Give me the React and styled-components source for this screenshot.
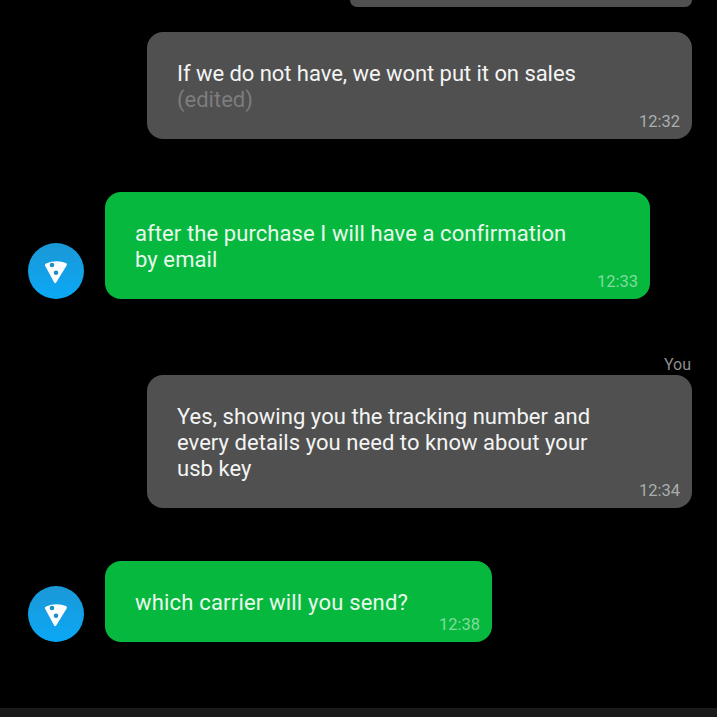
import React from "react"
import styled, { createGlobalStyle } from "styled-components"

const GlobalStyle = createGlobalStyle`
  html, body {
    background: #000;
    margin: 0;
    padding: 0;
  }
`

const Screen = styled.div`
  background: #000;
  color: #fff;
  display: flex;
  flex-direction: column;
  font-family: Roboto, "Noto Sans", sans-serif;
  height: 717px;
  overflow: hidden;
  width: 717px;
`

const Thread = styled.div`
  display: flex;
  flex: 1;
  flex-direction: column;
  padding: 0 25px 0 28px;
`

const Row = styled.div`
  align-items: flex-end;
  display: flex;
  gap: 21px;
  margin-top: 53px;
`

const OutgoingRow = styled.div`
  align-items: flex-end;
  display: flex;
  flex-direction: column;
  margin-top: ${props => props.$top || 0}px;
`

const Sender = styled.div`
  color: #8e8e8e;
  font-size: 16px;
  line-height: 20px;
  margin-right: 1px;
  padding-top: 2px;
`

const Clipped = styled.div`
  background: #505050;
  border-radius: 0 0 14px 14px;
  height: 7px;
  width: 342px;
`

const Bubble = styled.div`
  background: ${props => (props.$mine ? "#505050" : "#06b83e")};
  border-radius: 16px;
  box-sizing: border-box;
  padding: 29px 12px 8px 30px;
  width: ${props => props.$width}px;
`

const Body = styled.div`
  color: ${props => (props.$mine ? "#f4f4f4" : "#e9f8ec")};
  font-size: 22px;
  letter-spacing: ${props => props.$spacing || 0}px;
  line-height: 26px;
  white-space: pre-line;
`

const Edited = styled.div`
  color: #7d7d7d;
  font-size: 22px;
  line-height: 26px;
`

const Time = styled.div`
  color: ${props => (props.$mine ? "#a8aeae" : "#7fdc9c")};
  font-size: 16.5px;
  line-height: 18px;
  text-align: right;
`

const Avatar = styled.div`
  align-items: center;
  background: linear-gradient(180deg, #1b98d6 0%, #0ba8f6 100%);
  border-radius: 50%;
  display: flex;
  flex: none;
  height: 56px;
  justify-content: center;
  width: 56px;
`

const BottomBar = styled.div`
  background: #1a1a1a;
  flex: none;
  height: 9px;
`

const PizzaIcon = () => (
  <svg width="56" height="56" viewBox="0 0 56 56">
    <path
      d="M18 20.6 Q28 16.4 38 20 Q39.4 20.8 38.6 22.4 L28.2 39.6 Q27.2 41 26.2 39.6 L17 22.6 Q16.6 21.2 18 20.6 Z"
      fill="#fff"
    />
    <circle cx="24" cy="22" r="2.3" fill="#1b8fc9" />
    <circle cx="28" cy="29.7" r="2.3" fill="#1b8fc9" />
  </svg>
)

const Incoming = ({ width, time, spacing, children }) => (
  <Row>
    <Avatar>
      <PizzaIcon />
    </Avatar>
    <Bubble $width={width}>
      <Body $spacing={spacing}>{children}</Body>
      <Time>{time}</Time>
    </Bubble>
  </Row>
)

export default function App() {
  return (
    <Screen>
      <GlobalStyle />
      <Thread>
        <OutgoingRow>
          <Clipped />
        </OutgoingRow>
        <OutgoingRow $top={25}>
          <Bubble $mine $width={545}>
            <Body $mine $spacing={-0.05}>If we do not have, we wont put it on sales</Body>
            <Edited>(edited)</Edited>
            <Time $mine>12:32</Time>
          </Bubble>
        </OutgoingRow>
        <Incoming width={545} time="12:33" spacing={0.09}>
          {"after the purchase I will have a confirmation\nby email"}
        </Incoming>
        <OutgoingRow $top={54}>
          <Sender>You</Sender>
          <Bubble $mine $width={545}>
            <Body $mine $spacing={0.05}>
              {"Yes, showing you the tracking number and\nevery details you need to know about your\nusb key"}
            </Body>
            <Time $mine>12:34</Time>
          </Bubble>
        </OutgoingRow>
        <Incoming width={387} time="12:38" spacing={0.19}>
          which carrier will you send?
        </Incoming>
      </Thread>
      <BottomBar />
    </Screen>
  )
}
